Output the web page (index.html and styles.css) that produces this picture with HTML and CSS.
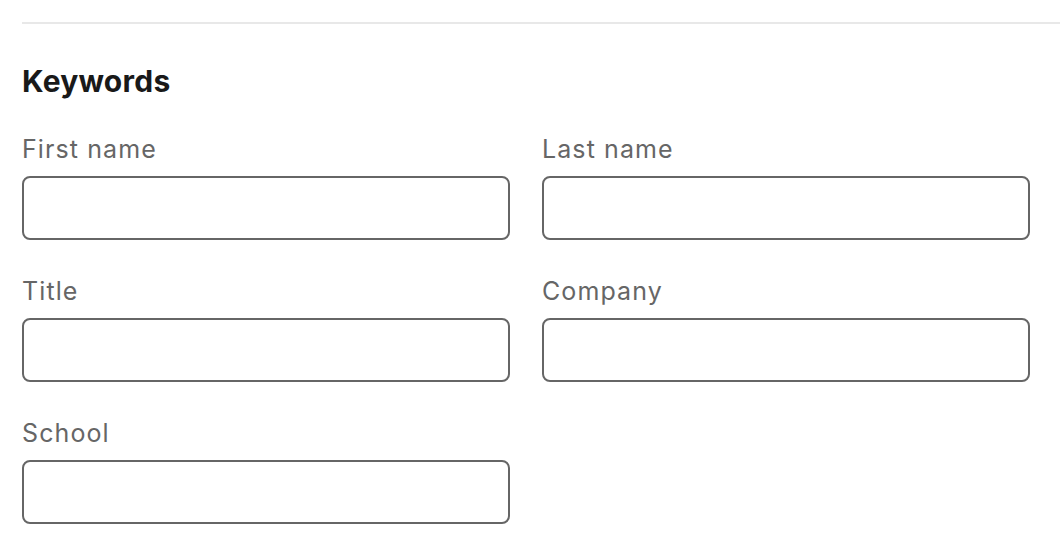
FILE: index.html
```html
<!DOCTYPE html>
<html lang="en">
<head>
<meta charset="utf-8">
<title>Keywords</title>
<link rel="stylesheet" href="styles.css">
</head>
<body>
<section class="panel">
  <hr class="divider">
  <h2 class="heading">Keywords</h2>
  <div class="grid">
    <div class="field">
      <label class="label" for="fn">First name</label>
      <input class="input" id="fn" type="text">
    </div>
    <div class="field">
      <label class="label" for="ln">Last name</label>
      <input class="input" id="ln" type="text">
    </div>
    <div class="field">
      <label class="label" for="ti">Title</label>
      <input class="input" id="ti" type="text">
    </div>
    <div class="field">
      <label class="label" for="co">Company</label>
      <input class="input" id="co" type="text">
    </div>
    <div class="field">
      <label class="label" for="sc">School</label>
      <input class="input" id="sc" type="text">
    </div>
  </div>
</section>
</body>
</html>
```
FILE: styles.css
```css
html, body {
  margin: 0;
  padding: 0;
  background: #ffffff;
}
body {
  font-family: Inter, "Liberation Sans", Arial, sans-serif;
}
.panel {
  padding-left: 22px;
  padding-top: 22px;
}
.divider {
  margin: 0;
  border: 0;
  height: 2px;
  background: #e8e8e8;
}
.heading {
  margin: 37px 0 0 0;
  font-size: 30px;
  line-height: 40px;
  font-weight: 700;
  letter-spacing: 0.25px;
  color: #191919;
}
.grid {
  margin-top: 32px;
  display: grid;
  grid-template-columns: 488px 488px;
  column-gap: 32px;
  row-gap: 35px;
}
.field {
  display: flex;
  flex-direction: column;
}
.label {
  font-size: 25px;
  line-height: 32px;
  letter-spacing: 1.1px;
  color: #666666;
}
.input {
  margin-top: 11px;
  height: 64px;
  box-sizing: border-box;
  border: 2px solid #666666;
  border-radius: 8px;
  background: #ffffff;
  padding: 0 16px;
  font: inherit;
  outline: none;
}
```
